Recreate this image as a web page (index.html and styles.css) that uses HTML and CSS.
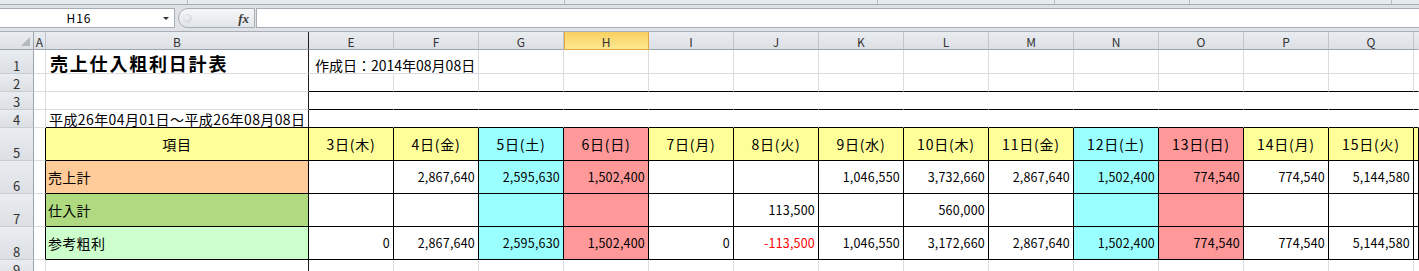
FILE: index.html
```html
<!DOCTYPE html>
<html lang="ja">
<head>
    <meta charset="UTF-8">
    <title>売上仕入粗利日計表</title>
    <link rel="stylesheet" href="styles.css">
</head>
<body>
    <div class="ribbon">
        <span></span><span></span><span></span><span></span><span></span><span></span><span class="end"></span>
    </div>

    <div class="fbar">
        <div class="namebox">
            <span class="ref">H16</span>
            <span class="arrow"></span>
        </div>
        <div class="grip">
            <span class="knob"></span>
            <span class="fx">fx</span>
        </div>
        <div class="formula"></div>
    </div>

    <div class="sheet">
        <!-- 列見出し -->
        <div class="corner"><i></i></div>
        <div class="ch">A</div>
        <div class="ch fz">B</div>
        <div class="ch">E</div>
        <div class="ch">F</div>
        <div class="ch">G</div>
        <div class="ch act">H</div>
        <div class="ch">I</div>
        <div class="ch">J</div>
        <div class="ch">K</div>
        <div class="ch">L</div>
        <div class="ch">M</div>
        <div class="ch">N</div>
        <div class="ch">O</div>
        <div class="ch">P</div>
        <div class="ch">Q</div>
        <div class="ch nr"></div>

        <!-- 1 -->
        <div class="rh">1</div>
        <div class="c"></div>
        <div class="c fz title">売上仕入粗利日計表</div>
        <div class="c nr date">作成日：2014年08月08日</div>
        <div class="c"></div><div class="c"></div><div class="c"></div><div class="c"></div>
        <div class="c"></div><div class="c"></div><div class="c"></div><div class="c"></div>
        <div class="c"></div><div class="c"></div><div class="c"></div><div class="c"></div>
        <div class="c nr"></div>

        <!-- 2 -->
        <div class="rh">2</div>
        <div class="c"></div>
        <div class="c fz"></div>
        <div class="c bb"></div><div class="c bb"></div><div class="c bb"></div><div class="c bb"></div>
        <div class="c bb"></div><div class="c bb"></div><div class="c bb"></div><div class="c bb"></div>
        <div class="c bb"></div><div class="c bb"></div><div class="c bb"></div><div class="c bb"></div>
        <div class="c bb"></div>
        <div class="c bb nr"></div>

        <!-- 3 -->
        <div class="rh">3</div>
        <div class="c"></div>
        <div class="c fz"></div>
        <div class="c bb nr"></div><div class="c bb nr"></div><div class="c bb nr"></div><div class="c bb nr"></div>
        <div class="c bb nr"></div><div class="c bb nr"></div><div class="c bb nr"></div><div class="c bb nr"></div>
        <div class="c bb nr"></div><div class="c bb nr"></div><div class="c bb nr"></div><div class="c bb nr"></div>
        <div class="c bb nr"></div><div class="c bb nr"></div>

        <!-- 4 -->
        <div class="rh">4</div>
        <div class="c"></div>
        <div class="c fz bb period">平成26年04月01日～平成26年08月08日</div>
        <div class="c bb nr"></div><div class="c bb nr"></div><div class="c bb nr"></div><div class="c bb nr"></div>
        <div class="c bb nr"></div><div class="c bb nr"></div><div class="c bb nr"></div><div class="c bb nr"></div>
        <div class="c bb nr"></div><div class="c bb nr"></div><div class="c bb nr"></div><div class="c bb nr"></div>
        <div class="c bb nr"></div><div class="c bb nr"></div>

        <!-- 5 見出し -->
        <div class="rh">5</div>
        <div class="c br"></div>
        <div class="c d hd yel">項目</div>
        <div class="c d hd yel">3日(木)</div>
        <div class="c d hd yel">4日(金)</div>
        <div class="c d hd cyn">5日(土)</div>
        <div class="c d hd pnk">6日(日)</div>
        <div class="c d hd yel">7日(月)</div>
        <div class="c d hd yel">8日(火)</div>
        <div class="c d hd yel">9日(水)</div>
        <div class="c d hd yel">10日(木)</div>
        <div class="c d hd yel">11日(金)</div>
        <div class="c d hd cyn">12日(土)</div>
        <div class="c d hd pnk">13日(日)</div>
        <div class="c d hd yel">14日(月)</div>
        <div class="c d hd yel">15日(火)</div>
        <div class="c d hd yel nr"></div>

        <!-- 6 売上計 -->
        <div class="rh">6</div>
        <div class="c br"></div>
        <div class="c d lbl org">売上計</div>
        <div class="c d num"></div>
        <div class="c d num">2,867,640</div>
        <div class="c d num cyn">2,595,630</div>
        <div class="c d num pnk">1,502,400</div>
        <div class="c d num"></div>
        <div class="c d num"></div>
        <div class="c d num">1,046,550</div>
        <div class="c d num">3,732,660</div>
        <div class="c d num">2,867,640</div>
        <div class="c d num cyn">1,502,400</div>
        <div class="c d num pnk">774,540</div>
        <div class="c d num">774,540</div>
        <div class="c d num">5,144,580</div>
        <div class="c d nr"></div>

        <!-- 7 仕入計 -->
        <div class="rh">7</div>
        <div class="c br"></div>
        <div class="c d lbl grn">仕入計</div>
        <div class="c d num"></div>
        <div class="c d num"></div>
        <div class="c d num cyn"></div>
        <div class="c d num pnk"></div>
        <div class="c d num"></div>
        <div class="c d num">113,500</div>
        <div class="c d num"></div>
        <div class="c d num">560,000</div>
        <div class="c d num"></div>
        <div class="c d num cyn"></div>
        <div class="c d num pnk"></div>
        <div class="c d num"></div>
        <div class="c d num"></div>
        <div class="c d nr"></div>

        <!-- 8 参考粗利 -->
        <div class="rh">8</div>
        <div class="c br"></div>
        <div class="c d lbl lgr">参考粗利</div>
        <div class="c d num">0</div>
        <div class="c d num">2,867,640</div>
        <div class="c d num cyn">2,595,630</div>
        <div class="c d num pnk">1,502,400</div>
        <div class="c d num">0</div>
        <div class="c d num neg">-113,500</div>
        <div class="c d num">1,046,550</div>
        <div class="c d num">3,172,660</div>
        <div class="c d num">2,867,640</div>
        <div class="c d num cyn">1,502,400</div>
        <div class="c d num pnk">774,540</div>
        <div class="c d num">774,540</div>
        <div class="c d num">5,144,580</div>
        <div class="c d nr"></div>

        <!-- 9 -->
        <div class="rh">9</div>
        <div class="c"></div>
        <div class="c fz"></div>
        <div class="c"></div><div class="c"></div><div class="c"></div><div class="c"></div>
        <div class="c"></div><div class="c"></div><div class="c"></div><div class="c"></div>
        <div class="c"></div><div class="c"></div><div class="c"></div><div class="c"></div>
        <div class="c"></div>
        <div class="c nr"></div>
    </div>
</body>
</html>
```

FILE: styles.css
```css
html, body {
    margin: 0;
    padding: 0;
}

body {
    width: 1419px;
    height: 271px;
    overflow: hidden;
    background: #fff;
    color: #000;
    font-family: "Noto Sans CJK JP", "Liberation Sans", sans-serif;
}

/* リボン下端 */
.ribbon {
    display: grid;
    grid-template-columns: 188px 377px 313px 177px 135px 202px 1fr;
    height: 4px;
    background: #e7eaee;
    border-bottom: 1px solid #a5abb2;
}

.ribbon span {
    border-right: 1px solid #b7bcc3;
}

.ribbon .end {
    border-right: none;
}

/* 数式バー */
.fbar {
    display: flex;
    align-items: flex-start;
    box-sizing: border-box;
    height: 27px;
    padding-top: 3px;
    background: #dfe3e8;
    border-bottom: 1px solid #a9aeb5;
}

.namebox {
    display: flex;
    align-items: center;
    box-sizing: border-box;
    width: 175px;
    height: 20px;
    background: #fff;
    border: 1px solid #a7adb5;
    border-left: none;
}

.namebox .ref {
    width: 158px;
    text-align: center;
    font-size: 12px;
    letter-spacing: 1px;
    line-height: 1;
}

.namebox .arrow {
    width: 0;
    height: 0;
    margin-left: 5px;
    border-left: 3px solid transparent;
    border-right: 3px solid transparent;
    border-top: 3px solid #333;
}

.grip {
    display: flex;
    align-items: center;
    box-sizing: border-box;
    width: 77px;
    height: 20px;
    margin-left: 3px;
    padding: 0 5px 0 4px;
    border: 1px solid #a7adb5;
    border-radius: 10px 0 0 10px;
    background: linear-gradient(#f6f7f9, #e2e5e9);
}

.grip .knob {
    width: 9px;
    height: 9px;
    border-radius: 50%;
    background: radial-gradient(circle at 40% 35%, #f2f3f5, #c9cdd3);
}

.grip .fx {
    margin-left: auto;
    font-family: "Liberation Serif", serif;
    font-style: italic;
    font-weight: bold;
    font-size: 13px;
    line-height: 1;
    color: #3a3a3a;
}

.formula {
    flex: 1;
    box-sizing: border-box;
    height: 20px;
    margin-left: 1px;
    background: #fff;
    border: 1px solid #a7adb5;
    border-right: none;
}

/* シート */
.sheet {
    display: grid;
    grid-template-columns: 34px 12px 263px repeat(13, 85px) 1fr;
    grid-template-rows: 18px 24px 18px 18px 18px 33px 33px 33px 33px 18px;
}

.sheet > div {
    box-sizing: border-box;
    min-width: 0;
    display: flex;
    align-items: flex-end;
    white-space: nowrap;
    line-height: 1;
    font-size: 14px;
}

.corner, .ch, .rh {
    background: linear-gradient(#e9ecf0, #dcdfe4);
    color: #333;
}

.corner {
    justify-content: flex-end;
    border-right: 1px solid #9ea4ab;
    border-bottom: 1px solid #9ea4ab;
}

.corner i {
    width: 0;
    height: 0;
    margin: 0 3px 3px 0;
    border-left: 9px solid transparent;
    border-bottom: 9px solid #b4b9bf;
}

.sheet > .ch {
    align-items: center;
    justify-content: center;
    padding-top: 2px;
    font-size: 12px;
    border-right: 1px solid #c0c5cb;
    border-bottom: 1px solid #9ea4ab;
}

.sheet > .ch.act {
    background: linear-gradient(#f9d062, #fee890);
    border-right-color: #dfa843;
    border-bottom-color: #dfa843;
    box-shadow: inset 1px 0 #dfa843;
}

.sheet > .rh {
    justify-content: center;
    padding-bottom: 1px;
    font-size: 13px;
    border-right: 1px solid #9ea4ab;
    border-bottom: 1px solid #c9cdd2;
}

.c {
    border-right: 1px solid #dadcdd;
    border-bottom: 1px solid #dadcdd;
}

/* ウィンドウ枠の固定線 */
.sheet > .fz {
    border-right-color: #1e1e1e;
}

.sheet > .nr {
    border-right-color: transparent;
}

.sheet > .bb {
    border-bottom-color: #000;
}

.sheet > .br {
    border-right-color: #000;
}

.sheet > .d {
    align-items: center;
    border-right-color: #000;
    border-bottom-color: #000;
}

.sheet > .title {
    padding: 0 0 1px 4px;
    font-size: 18px;
    font-weight: bold;
    letter-spacing: 1.8px;
}

.sheet > .date {
    padding: 0 0 1px 6px;
}

.sheet > .period {
    padding: 0 0 1px 3px;
    letter-spacing: 0.4px;
}

.hd {
    justify-content: center;
    letter-spacing: 0.8px;
}

.lbl {
    padding-left: 2px;
    letter-spacing: 0.3px;
}

.sheet > .num {
    justify-content: flex-end;
    padding: 1px 3px 0 0;
    font-size: 12.5px;
    letter-spacing: 0.2px;
}

.neg {
    color: #f00;
}

/* 塗りつぶし */
.yel { background: #ffff99; }
.cyn { background: #99ffff; }
.pnk { background: #ff9999; }
.org { background: #ffcc99; }
.grn { background: #b0da80; }
.lgr { background: #ccffcc; }
```
